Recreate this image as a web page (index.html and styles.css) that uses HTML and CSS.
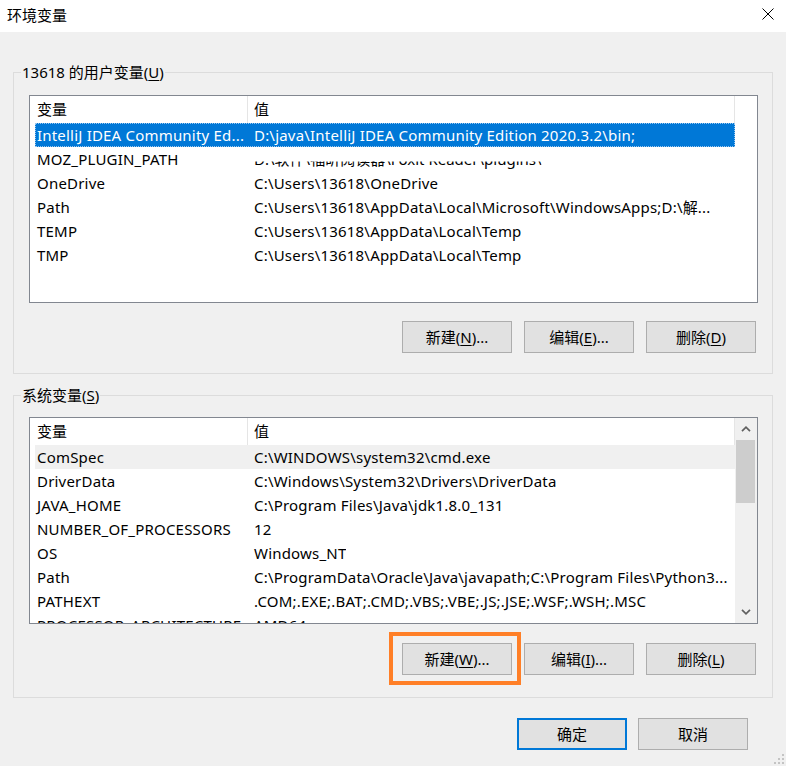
FILE: index.html
```html
<!DOCTYPE html>
<html>
<head>
  <meta charset="utf-8">
  <title>环境变量</title>
  <link rel="stylesheet" href="styles.css">
</head>
<body>
  <div class="titlebar">
    <span class="title">环境变量</span>
    <svg class="close" width="12" height="12" viewBox="0 0 12 12">
      <path d="M0.5 0.5 L11.5 11.5 M11.5 0.5 L0.5 11.5" stroke="#000" stroke-width="1" fill="none"/>
    </svg>
  </div>

  <fieldset class="group user-group">
    <legend>13618 的用户变量(<u>U</u>)</legend>
    <div class="list user-list">
      <div class="list-main">
        <div class="list-head">
          <div class="col-name">变量</div>
          <div class="col-value">值</div>
        </div>
        <div class="row selected"><span class="name">IntelliJ IDEA Community Ed...</span><span class="value">D:\java\IntelliJ IDEA Community Edition 2020.3.2\bin;</span></div>
        <div class="row"><span class="name">MOZ_PLUGIN_PATH</span><span class="value"><span class="garbled">D:\软件\福昕阅读器\Foxit Reader\plugins\</span></span></div>
        <div class="row"><span class="name">OneDrive</span><span class="value">C:\Users\13618\OneDrive</span></div>
        <div class="row"><span class="name">Path</span><span class="value">C:\Users\13618\AppData\Local\Microsoft\WindowsApps;D:\解...</span></div>
        <div class="row"><span class="name">TEMP</span><span class="value">C:\Users\13618\AppData\Local\Temp</span></div>
        <div class="row"><span class="name">TMP</span><span class="value">C:\Users\13618\AppData\Local\Temp</span></div>
      </div>
    </div>
    <div class="buttons">
      <button>新建(<u>N</u>)...</button>
      <button>编辑(<u>E</u>)...</button>
      <button>删除(<u>D</u>)</button>
    </div>
  </fieldset>

  <fieldset class="group system-group">
    <legend>系统变量(<u>S</u>)</legend>
    <div class="list system-list">
      <div class="list-main">
        <div class="list-head">
          <div class="col-name">变量</div>
          <div class="col-value">值</div>
        </div>
        <div class="row hot"><span class="name">ComSpec</span><span class="value">C:\WINDOWS\system32\cmd.exe</span></div>
        <div class="row"><span class="name">DriverData</span><span class="value">C:\Windows\System32\Drivers\DriverData</span></div>
        <div class="row"><span class="name">JAVA_HOME</span><span class="value">C:\Program Files\Java\jdk1.8.0_131</span></div>
        <div class="row"><span class="name">NUMBER_OF_PROCESSORS</span><span class="value">12</span></div>
        <div class="row"><span class="name">OS</span><span class="value">Windows_NT</span></div>
        <div class="row"><span class="name">Path</span><span class="value">C:\ProgramData\Oracle\Java\javapath;C:\Program Files\Python3...</span></div>
        <div class="row"><span class="name">PATHEXT</span><span class="value">.COM;.EXE;.BAT;.CMD;.VBS;.VBE;.JS;.JSE;.WSF;.WSH;.MSC</span></div>
        <div class="row"><span class="name">PROCESSOR_ARCHITECTURE</span><span class="value">AMD64</span></div>
      </div>
      <div class="scrollbar">
        <div class="arrow">
          <svg width="10" height="6" viewBox="0 0 10 6"><path d="M1 5.2 L5 1.2 L9 5.2" stroke="#606060" stroke-width="1.7" fill="none"/></svg>
        </div>
        <div class="thumb"></div>
        <div class="track"></div>
        <div class="arrow">
          <svg width="10" height="6" viewBox="0 0 10 6"><path d="M1 0.8 L5 4.8 L9 0.8" stroke="#606060" stroke-width="1.7" fill="none"/></svg>
        </div>
      </div>
    </div>
    <div class="buttons">
      <button class="marked">新建(<u>W</u>)...</button>
      <button>编辑(<u>I</u>)...</button>
      <button>删除(<u>L</u>)</button>
    </div>
  </fieldset>

  <div class="footer">
    <button class="default">确定</button>
    <button>取消</button>
  </div>

  <svg class="grip" width="14" height="14" viewBox="0 0 14 14">
    <rect x="11" y="3" width="2" height="2" fill="#c4c4c4"/>
    <rect x="7" y="7" width="2" height="2" fill="#c4c4c4"/>
    <rect x="11" y="7" width="2" height="2" fill="#c4c4c4"/>
    <rect x="3" y="11" width="2" height="2" fill="#c4c4c4"/>
    <rect x="7" y="11" width="2" height="2" fill="#c4c4c4"/>
    <rect x="11" y="11" width="2" height="2" fill="#c4c4c4"/>
  </svg>
</body>
</html>
```

FILE: styles.css
```css
body {
  margin: 0;
  width: 786px;
  height: 766px;
  overflow: hidden;
  position: relative;
  background-color: #f0f0f0;
  font-family: "Noto Sans", "Noto Sans CJK SC", sans-serif;
  font-size: 15px;
  color: #000;
}

u {
  text-decoration: underline;
  text-underline-offset: 2px;
}

.titlebar {
  height: 32px;
  background-color: #fff;
  display: flex;
  align-items: center;
  justify-content: space-between;
  padding: 0 12px 0 7px;
}

.title {
  line-height: 20px;
  margin-top: -3px;
}

.close {
  margin-top: -5px;
}

.group {
  margin: 30px 13px 0 13px;
  padding: 13px 14px 20px 15px;
  border: 1px solid #dcdcdc;
  min-width: 0;
}

.system-group {
  margin-top: 11px;
  padding-top: 12px;
  padding-bottom: 22px;
}

.group legend {
  margin-left: -8px;
  padding: 0 1px;
  line-height: 20px;
}

.list {
  display: flex;
  height: 208px;
  box-sizing: border-box;
  border: 1px solid #828790;
  background-color: #fff;
  overflow: hidden;
}

.system-list {
  height: 207px;
}

.list-main {
  width: 705px;
  flex-shrink: 0;
  overflow: hidden;
}

.list-head {
  display: flex;
  height: 27px;
  line-height: 27px;
}

.list-head .col-name {
  width: 218px;
  padding-left: 7px;
  box-sizing: border-box;
  border-right: 1px solid #e5e5e5;
}

.list-head .col-value {
  flex: 1;
  padding-left: 6px;
  border-right: 1px solid #e5e5e5;
}

.row {
  display: flex;
  height: 24px;
  line-height: 24px;
  margin-left: 5px;
  white-space: nowrap;
  letter-spacing: 0.2px;
}

.row .name {
  width: 213px;
  flex-shrink: 0;
  padding-left: 2px;
  box-sizing: border-box;
  overflow: hidden;
}

.row .value {
  padding-left: 6px;
  overflow: hidden;
}

.row.selected {
  background-color: #0078d7;
  color: #fff;
  outline: 1px dotted #9cc8ee;
  outline-offset: -1px;
}

.row.hot {
  background-color: #f0f0f0;
}

.garbled {
  display: inline-block;
  letter-spacing: 0;
  clip-path: inset(60% 0 0 0);
}

.scrollbar {
  flex: 1;
  display: flex;
  flex-direction: column;
  background-color: #f0f0f0;
}

.scrollbar .arrow {
  height: 22px;
  display: flex;
  align-items: center;
  justify-content: center;
}

.scrollbar .thumb {
  height: 63px;
  margin: 0 2px 0 1px;
  background-color: #cdcdcd;
}

.scrollbar .track {
  flex: 1;
}

.buttons {
  display: flex;
  justify-content: flex-end;
  gap: 12px;
  margin-top: 18px;
  margin-right: 2px;
}

.system-group .buttons {
  margin-top: 19px;
}

button {
  width: 110px;
  height: 32px;
  padding: 0;
  background-color: #e1e1e1;
  border: 1px solid #adadad;
  font: inherit;
  color: #000;
  line-height: 20px;
}

button.marked {
  position: relative;
}

button.marked::after {
  content: "";
  position: absolute;
  left: -14px;
  top: -12px;
  width: 132px;
  height: 53px;
  box-sizing: border-box;
  border: 4px solid #ff7f27;
}

.footer {
  display: flex;
  justify-content: flex-end;
  gap: 11px;
  margin-top: 20px;
  padding-right: 38px;
}

button.default {
  border: 2px solid #0078d7;
}

.grip {
  position: absolute;
  right: 1px;
  bottom: 1px;
}
```
